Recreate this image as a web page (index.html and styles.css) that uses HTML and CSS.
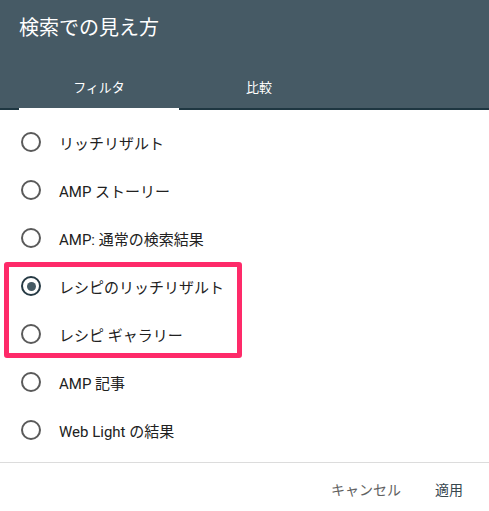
FILE: index.html
```html
<!DOCTYPE html>
<html lang="ja">
<head>
<meta charset="utf-8">
<link rel="stylesheet" href="styles.css">
</head>
<body>
<div class="dialog">
  <header class="head">
    <h1 class="title">検索での見え方</h1>
    <nav class="tabs">
      <div class="tab active">フィルタ</div>
      <div class="tab">比較</div>
    </nav>
  </header>
  <ul class="list">
    <li class="row"><span class="radio"></span><span class="label">リッチリザルト</span></li>
    <li class="row"><span class="radio"></span><span class="label">AMP ストーリー</span></li>
    <li class="row"><span class="radio"></span><span class="label">AMP: 通常の検索結果</span></li>
    <li class="row"><span class="radio checked"></span><span class="label">レシピのリッチリザルト</span></li>
    <li class="row"><span class="radio"></span><span class="label">レシピ ギャラリー</span></li>
    <li class="row"><span class="radio"></span><span class="label">AMP 記事</span></li>
    <li class="row"><span class="radio"></span><span class="label">Web Light の結果</span></li>
  </ul>
  <footer class="actions">
    <span class="btn cancel">キャンセル</span>
    <span class="btn apply">適用</span>
  </footer>
  <div class="highlight"></div>
</div>
</body>
</html>
```
FILE: styles.css
```css
* { box-sizing: border-box; }
html, body { margin: 0; padding: 0; background: #fff; }
body {
  font-family: Roboto, "Noto Sans CJK JP", sans-serif;
  width: 489px;
  height: 511px;
  overflow: hidden;
}
.dialog { position: relative; width: 489px; height: 511px; }
.head {
  background: #465a65;
  height: 110px;
  border-bottom: 2px solid #1e3641;
  display: flex;
  flex-direction: column;
}
.title {
  margin: 0;
  padding: 14px 0 0 19px;
  height: 62px;
  font-size: 20px;
  line-height: 28px;
  font-weight: 400;
  color: #fff;
}
.tabs { display: flex; padding-left: 19px; height: 46px; }
.tab {
  width: 160px;
  display: flex;
  align-items: center;
  justify-content: center;
  color: #fff;
  font-size: 13px;
  padding-top: 2px;
}
.tab.active { box-shadow: 0 2px 0 #fff; }
.list { list-style: none; margin: 0; padding: 8px 0 8px 0; }
.row {
  height: 48px;
  display: flex;
  align-items: center;
  padding-left: 21px;
}
.radio {
  width: 20px;
  height: 20px;
  border: 2px solid #5a5a5a;
  border-radius: 50%;
  display: flex;
  align-items: center;
  justify-content: center;
  flex: none;
}
.radio.checked { border-color: #263a44; }
.radio.checked::after {
  content: "";
  width: 9px;
  height: 9px;
  border-radius: 50%;
  background: #455a64;
}
.label {
  margin-left: 18px;
  font-size: 15px;
  color: #212121;
}
.actions {
  border-top: 1px solid #dcdcdc;
  height: 49px;
  display: flex;
  justify-content: flex-end;
  align-items: center;
  padding: 4px 26px 0 0;
  gap: 34px;
}
.btn { font-size: 14px; }
.cancel { color: #616161; }
.apply { color: #37474f; }
.highlight {
  position: absolute;
  left: 4px;
  top: 262px;
  width: 238px;
  height: 96px;
  border: 5px solid #fe2a69;
  border-radius: 3px;
}
```
